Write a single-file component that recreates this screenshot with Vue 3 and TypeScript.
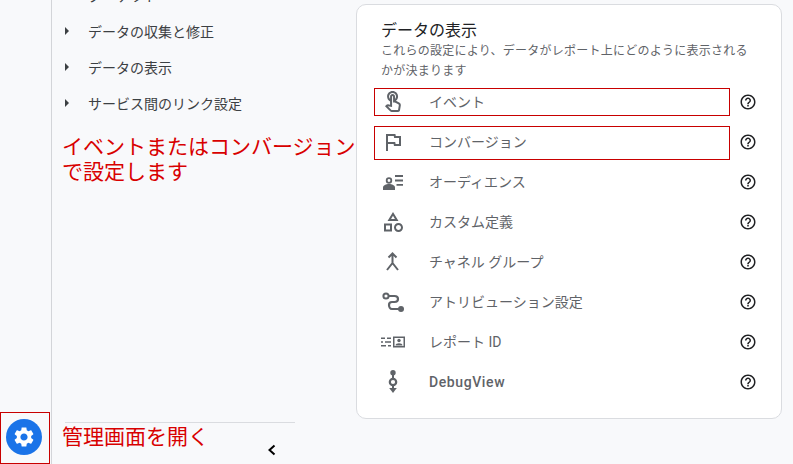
<script setup lang="ts">
const navItems = ["ターゲット", "データの収集と修正", "データの表示", "サービス間のリンク設定"];

const helpPath =
  "M11 18h2v-2h-2v2zm1-16C6.48 2 2 6.48 2 12s4.48 10 10 10 10-4.48 10-10S17.52 2 12 2zm0 18c-4.41 0-8-3.59-8-8s3.59-8 8-8 8 3.59 8 8-3.59 8-8 8zm0-14c-2.21 0-4 1.79-4 4h2c0-1.1.9-2 2-2s2 .9 2 2c0 2-3 1.75-3 5h2c0-2.25 3-2.5 3-5 0-2.21-1.79-4-4-4z";

const rows = [
  { key: "event", label: "イベント", mark: "mark-event" },
  { key: "conversion", label: "コンバージョン", mark: "mark-conversion" },
  { key: "audience", label: "オーディエンス", mark: "" },
  { key: "custom", label: "カスタム定義", mark: "" },
  { key: "channel", label: "チャネル グループ", mark: "" },
  { key: "attribution", label: "アトリビューション設定", mark: "" },
  { key: "report", label: "レポート ID", mark: "" },
  { key: "debug", label: "DebugView", mark: "" },
];
</script>

<template>
  <div class="page">
    <aside class="rail">
      <button class="gear-btn">
        <svg viewBox="0 0 24 24" width="24" height="24">
          <path
            fill="#fff"
            d="M19.14 12.94c.04-.3.06-.61.06-.94 0-.32-.02-.64-.07-.94l2.03-1.58c.18-.14.23-.41.12-.61l-1.92-3.32c-.12-.22-.37-.29-.59-.22l-2.39.96c-.5-.38-1.03-.7-1.62-.94l-.36-2.54c-.04-.24-.24-.41-.48-.41h-3.84c-.24 0-.43.17-.47.41l-.36 2.54c-.59.24-1.13.57-1.62.94l-2.39-.96c-.22-.08-.47 0-.59.22L2.74 8.87c-.12.21-.08.47.12.61l2.03 1.58c-.05.3-.09.63-.09.94s.02.64.07.94l-2.03 1.58c-.18.14-.23.41-.12.61l1.92 3.32c.12.22.37.29.59.22l2.39-.96c.5.38 1.03.7 1.62.94l.36 2.54c.05.24.24.41.48.41h3.84c.24 0 .44-.17.47-.41l.36-2.54c.59-.24 1.13-.56 1.62-.94l2.39.96c.22.08.47 0 .59-.22l1.92-3.32c.12-.22.07-.47-.12-.61l-2.01-1.58zM12 15.6c-1.98 0-3.6-1.62-3.6-3.6s1.62-3.6 3.6-3.6 3.6 1.62 3.6 3.6-1.62 3.6-3.6 3.6z"
          />
        </svg>
      </button>
      <span class="gear-mark"></span>
    </aside>

    <nav class="side">
      <ul class="nav-list">
        <li v-for="item in navItems" :key="item" class="nav-item">
          <span class="caret"></span>
          <span>{{ item }}</span>
        </li>
      </ul>
      <p class="note note-main">イベントまたはコンバージョンで設定します</p>
      <div class="side-foot">
        <p class="note note-admin">管理画面を開く</p>
        <svg class="collapse" viewBox="0 0 12 12" width="12" height="12">
          <path d="M8.500 1.500 3.500 6l5 4.500" fill="none" stroke="#000" stroke-width="2" />
        </svg>
      </div>
    </nav>

    <main class="content">
      <section class="card">
        <h2 class="card-title">データの表示</h2>
        <p class="card-desc">これらの設定により、データがレポート上にどのように表示されるかが決まります</p>
        <ul class="rows">
          <li v-for="row in rows" :key="row.key" class="row">
            <span class="row-icon">
              <svg v-if="row.key === 'event'" viewBox="0 0 24 24" width="24" height="24">
                <path d="M18.19 12.44l-3.24-1.62c1.29-1 2.12-2.56 2.12-4.32 0-3.03-2.47-5.5-5.5-5.5s-5.5 2.47-5.5 5.5c0 2.13 1.22 3.98 3 4.89v3.26c-2.15-.46-2.02-.44-2.26-.44-.53 0-1.03.21-1.41.59L4 16.22l5.09 5.09C9.52 21.75 10.12 22 10.74 22h6.3c.98 0 1.81-.7 1.97-1.67l.8-4.71c.22-1.3-.43-2.58-1.62-3.18zm-.35 2.85l-.8 4.71h-6.3c-.09 0-.17-.04-.24-.1l-3.68-3.68 4.25.89V6.5c0-.28.22-.5.5-.5s.5.22.5.5v6h1.76l3.46 1.73c.4.2.62.63.55 1.06zM8.07 6.5c0-1.93 1.57-3.5 3.5-3.5s3.5 1.57 3.5 3.5c0 .95-.38 1.81-1 2.44V6.5c0-1.38-1.12-2.5-2.5-2.5s-2.5 1.12-2.5 2.5v2.44c-.62-.63-1-1.49-1-2.44z" />
              </svg>
              <svg v-else-if="row.key === 'conversion'" viewBox="0 0 24 24" width="24" height="24">
                <path d="M14.400 4H5v17h2v-7h5.600l.4 2H20V6h-5.200l-.4-2zM7 6h5.760l.4 2H18v6h-3.400l-.4-2H7V6z" />
              </svg>
              <svg v-else-if="row.key === 'audience'" viewBox="0 0 24 24" width="24" height="24">
                <path d="M14 5h8v2h-8V5zm0 4.500h8v2h-8v-2zm1.500 4.500h6.500v1.800h-6.500V14z" />
                <circle cx="8" cy="10.500" r="2.300" fill="none" stroke="#5f6368" stroke-width="1.800" />
                <path d="M2 20v-2.500c0-2 3-3.500 6-3.500s6 1.500 6 3.500V20H2z" />
              </svg>
              <svg v-else-if="row.key === 'custom'" viewBox="0 0 24 24" width="24" height="24">
                <path d="M12 2l-5.500 9h11L12 2zm0 3.840L13.930 9h-3.870L12 5.840zM17.500 13c-2.490 0-4.500 2.010-4.500 4.500s2.010 4.500 4.500 4.500 4.500-2.010 4.500-4.500-2.010-4.500-4.500-4.500zm0 7c-1.380 0-2.500-1.120-2.500-2.500s1.120-2.500 2.500-2.500 2.500 1.120 2.500 2.500-1.120 2.500-2.500 2.500zM3 21.500h8v-8H3v8zm2-6h4v4H5v-4z" />
              </svg>
              <svg v-else-if="row.key === 'channel'" viewBox="0 0 24 24" width="24" height="24">
                <path d="M7.500 7.500 11.500 3.500l4 4M11.500 4v9L6 20M11.500 13l5.500 7" fill="none" stroke="#5f6368" stroke-width="2" />
              </svg>
              <svg v-else-if="row.key === 'attribution'" viewBox="0 0 24 24" width="24" height="24">
                <circle cx="5" cy="6" r="2.600" fill="none" stroke="#5f6368" stroke-width="2" />
                <path d="M8 6h5.500C16 6 17 7.500 17 9s-1 3-3.500 3H11c-2 0-3 1.500-3 3s1 4 3 4h7" fill="none" stroke="#5f6368" stroke-width="2.200" />
                <circle cx="20" cy="19" r="3" />
              </svg>
              <svg v-else-if="row.key === 'report'" viewBox="0 0 24 24" width="24" height="24">
                <path d="M0 7.500h4v1.600H0zm6 0h4v1.600H6zM0 11.200h2v1.600H0zm4 0h6v1.600H4zM0 14.900h5v1.600H0zm7 0h3v1.600H7z" />
                <path d="M12 6.500h12v11H12v-11zm1.500 1.500v8h9V8h-9z" />
                <circle cx="18" cy="10.500" r="1.700" />
                <path d="M14.500 15.500c0-1.500 1.700-2.200 3.500-2.200s3.500.7 3.500 2.200h-7z" />
              </svg>
              <svg v-else viewBox="0 0 24 24" width="24" height="24">
                <circle cx="12" cy="2.800" r="2.700" />
                <circle cx="12" cy="12" r="3.200" fill="none" stroke="#5f6368" stroke-width="2.200" />
                <path d="M11 4h2v5h-2zM11 15h2v4h-2z" />
                <path d="M8.200 18h7.600L12 23z" />
              </svg>
            </span>
            <span class="row-label" :class="{ 'row-label-latin': row.key === 'debug' }">{{ row.label }}</span>
            <svg class="help" viewBox="0 0 24 24" width="18" height="18"><path :d="helpPath" /></svg>
            <span v-if="row.mark" class="mark" :class="row.mark"></span>
          </li>
        </ul>
      </section>
    </main>
  </div>
</template>

<style scoped>
.page {
  display: flex;
  width: 793px;
  height: 464px;
  overflow: hidden;
  background: #f8f9fb;
  font-family: Roboto, "Noto Sans CJK JP", sans-serif;
}
.rail {
  position: relative;
  flex: 0 0 52px;
  display: flex;
  align-items: flex-end;
  padding: 0 0 9px 6px;
  box-sizing: border-box;
  border-right: 1px solid #d3d5d9;
}
.gear-btn {
  display: flex;
  align-items: center;
  justify-content: center;
  width: 36px;
  height: 36px;
  padding: 0;
  border: 0;
  border-radius: 50%;
  background: #1a73e8;
}
.gear-mark {
  position: absolute;
  left: 0;
  top: 412px;
  width: 50px;
  height: 52px;
  box-sizing: border-box;
  border: 1px solid #c80000;
}
.side {
  flex: 0 0 304px;
  min-width: 0;
  position: relative;
  display: flex;
  flex-direction: column;
}
.nav-list {
  list-style: none;
  margin: -23px 0 0;
  padding: 0;
}
.nav-item {
  display: flex;
  align-items: center;
  height: 36px;
  padding-left: 13px;
  font-size: 14px;
  color: #3c4043;
}
.caret {
  width: 0;
  height: 0;
  margin-right: 19px;
  border-left: 4px solid #3c4043;
  border-top: 4px solid transparent;
  border-bottom: 4px solid transparent;
}
.note {
  margin: 0;
  color: #d80000;
  font-size: 21px;
  line-height: 25px;
}
.note-main {
  width: 294px;
  margin: 14px 0 0 10px;
}
.side-foot {
  position: relative;
  margin: auto 0 0 13px;
  width: 230px;
  height: 42px;
  padding-top: 2px;
  box-sizing: border-box;
  border-top: 1px solid #dadce0;
}
.note-admin {
  margin-left: -3px;
  white-space: nowrap;
}
.collapse {
  position: absolute;
  right: 17px;
  top: 21px;
}
.content {
  flex: 1;
  min-width: 0;
  padding: 4px 11px 45px 0;
  box-sizing: border-box;
}
.card {
  height: 100%;
  box-sizing: border-box;
  padding: 16px 24px 0;
  background: #fff;
  border: 1px solid #dadce0;
  border-radius: 10px;
}
.card-title {
  margin: 0;
  font-size: 16px;
  font-weight: 400;
  line-height: 20px;
  color: #202124;
}
.card-desc {
  margin: 0;
  font-size: 12px;
  letter-spacing: 0.25px;
  line-height: 20px;
  color: #5f6368;
}
.rows {
  list-style: none;
  margin: 1px 0 0;
  padding: 0;
}
.row {
  position: relative;
  display: flex;
  align-items: center;
  height: 40px;
  font-size: 14px;
  color: #5f6368;
}
.row-icon {
  display: flex;
  width: 48px;
  fill: #5f6368;
}
.row-label {
  flex: 1;
  padding-bottom: 2px;
}
.row-label-latin {
  padding-bottom: 0;
  font-weight: 500;
  letter-spacing: 0.6px;
}
.help {
  fill: #202124;
}
.mark {
  position: absolute;
  left: -7px;
  width: 356px;
  box-sizing: border-box;
  border: 1px solid #c80000;
}
.mark-event {
  top: 6px;
  height: 28px;
}
.mark-conversion {
  top: 4px;
  height: 34px;
}
</style>
